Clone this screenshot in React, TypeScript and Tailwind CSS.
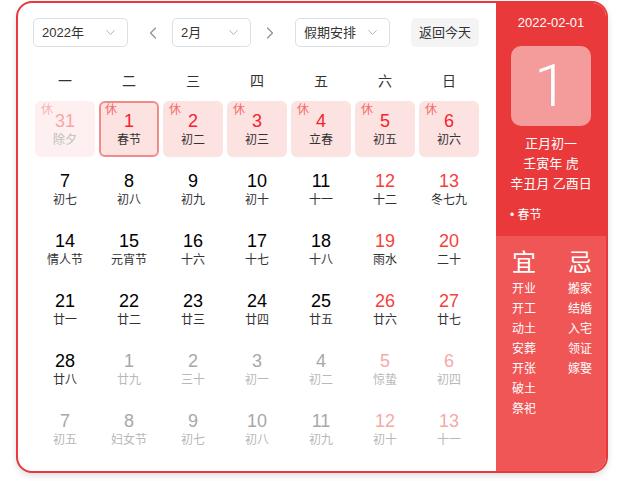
import React from "react";
import { ChevronDown, ChevronLeft, ChevronRight } from "lucide-react";

type Cell = {
  d: number;
  l: string;
  kind: "prev" | "cur" | "next";
  weekend?: boolean;
  rest?: boolean;
  selected?: boolean;
};

const FONT = { fontFamily: '"Liberation Sans", Arial, "Noto Sans CJK SC", sans-serif' };

const rows: Cell[][] = [
  [
    { d: 31, l: "除夕", kind: "prev", rest: true },
    { d: 1, l: "春节", kind: "cur", rest: true, selected: true },
    { d: 2, l: "初二", kind: "cur", rest: true },
    { d: 3, l: "初三", kind: "cur", rest: true },
    { d: 4, l: "立春", kind: "cur", rest: true },
    { d: 5, l: "初五", kind: "cur", rest: true, weekend: true },
    { d: 6, l: "初六", kind: "cur", rest: true, weekend: true },
  ],
  [
    { d: 7, l: "初七", kind: "cur" },
    { d: 8, l: "初八", kind: "cur" },
    { d: 9, l: "初九", kind: "cur" },
    { d: 10, l: "初十", kind: "cur" },
    { d: 11, l: "十一", kind: "cur" },
    { d: 12, l: "十二", kind: "cur", weekend: true },
    { d: 13, l: "冬七九", kind: "cur", weekend: true },
  ],
  [
    { d: 14, l: "情人节", kind: "cur" },
    { d: 15, l: "元宵节", kind: "cur" },
    { d: 16, l: "十六", kind: "cur" },
    { d: 17, l: "十七", kind: "cur" },
    { d: 18, l: "十八", kind: "cur" },
    { d: 19, l: "雨水", kind: "cur", weekend: true },
    { d: 20, l: "二十", kind: "cur", weekend: true },
  ],
  [
    { d: 21, l: "廿一", kind: "cur" },
    { d: 22, l: "廿二", kind: "cur" },
    { d: 23, l: "廿三", kind: "cur" },
    { d: 24, l: "廿四", kind: "cur" },
    { d: 25, l: "廿五", kind: "cur" },
    { d: 26, l: "廿六", kind: "cur", weekend: true },
    { d: 27, l: "廿七", kind: "cur", weekend: true },
  ],
  [
    { d: 28, l: "廿八", kind: "cur" },
    { d: 1, l: "廿九", kind: "next" },
    { d: 2, l: "三十", kind: "next" },
    { d: 3, l: "初一", kind: "next" },
    { d: 4, l: "初二", kind: "next" },
    { d: 5, l: "惊蛰", kind: "next", weekend: true },
    { d: 6, l: "初四", kind: "next", weekend: true },
  ],
  [
    { d: 7, l: "初五", kind: "next" },
    { d: 8, l: "妇女节", kind: "next" },
    { d: 9, l: "初七", kind: "next" },
    { d: 10, l: "初八", kind: "next" },
    { d: 11, l: "初九", kind: "next" },
    { d: 12, l: "初十", kind: "next", weekend: true },
    { d: 13, l: "十一", kind: "next", weekend: true },
  ],
];

function Select({ label, w }: { label: string; w: string }) {
  return (
    <div
      className={`${w} h-[29px] flex items-center justify-between pl-[8px] pr-[9px] border border-[#dcdfe6] rounded-[5px] bg-white text-[13px] text-[#333]`}
    >
      <span>{label}</span>
      <ChevronDown size={15} strokeWidth={1.5} color="#a8abb2" />
    </div>
  );
}

function DayCell({ c }: { c: Cell }) {
  let bg = "";
  let numColor = "text-black";
  let lunarColor = "text-[#333]";
  let restColor = "text-[#f56c6c]";
  if (c.kind === "prev") {
    bg = "bg-[#fef0f0]";
    numColor = "text-[#f7a7a7]";
    lunarColor = "text-[#bdbdbd]";
    restColor = "text-[#f9b4b4]";
  } else if (c.kind === "next") {
    numColor = c.weekend ? "text-[#f8a8a8]" : "text-[#a8a8a8]";
    lunarColor = "text-[#b8b8b8]";
  } else {
    if (c.rest) {
      bg = "bg-[#fde2e2]";
      numColor = "text-[#f5222d]";
    } else if (c.weekend) {
      numColor = "text-[#f5413d]";
    }
  }
  const border = c.selected ? "border-2 border-[#f28a8a]" : "";
  return (
    <div className={`relative h-[56px] rounded-[6px] ${bg} ${border} flex flex-col items-center ${c.selected ? "pt-[7px]" : "pt-[9px]"}`}>
      {c.rest && (
        <span className={`absolute ${c.selected ? "left-[4px] top-0" : "left-[6px] top-[2px]"} text-[12px] leading-[14px] ${restColor}`}>休</span>
      )}
      <span className={`text-[18px] leading-[22px] ${numColor}`}>{c.d}</span>
      <span className={`text-[12px] leading-[16px] ${lunarColor}`}>{c.l}</span>
    </div>
  );
}

export default function App() {
  const weekdays = ["一", "二", "三", "四", "五", "六", "日"];
  const yi = ["开业", "开工", "动土", "安葬", "开张", "破土", "祭祀"];
  const ji = ["搬家", "结婚", "入宅", "领证", "嫁娶"];
  return (
    <div className="w-[622px] h-[481px] bg-white" style={FONT}>
      <div className="ml-[16px] mt-[1px] w-[592px] h-[472px] border-2 border-[#e8383a] rounded-[16px] overflow-hidden flex bg-white shadow-[0_3px_6px_rgba(0,0,0,0.12)]">
        {/* left */}
        <div className="w-[478px] pl-[15px] pr-[17px] pt-[15px]">
          <div className="flex items-center h-[29px]">
            <Select label="2022年" w="w-[95px]" />
            <div className="w-[44px] flex justify-center pl-[6px]">
              <ChevronLeft size={20} strokeWidth={1.5} color="#909399" />
            </div>
            <Select label="2月" w="w-[79px]" />
            <div className="w-[44px] flex justify-center pr-[6px]">
              <ChevronRight size={20} strokeWidth={1.5} color="#909399" />
            </div>
            <Select label="假期安排" w="w-[95px]" />
            <div className="ml-[21px] w-[68px] h-[29px] rounded-[5px] bg-[#f4f4f5] flex items-center justify-center text-[13px] text-[#333]">
              返回今天
            </div>
          </div>
          <div className="ml-[2px] w-[444px] mt-[22px] grid grid-cols-7 gap-x-[4px] h-[24px] items-center">
            {weekdays.map((w) => (
              <div key={w} className="text-center text-[14px] text-[#333]">
                {w}
              </div>
            ))}
          </div>
          <div className="ml-[2px] w-[444px] mt-[8px] grid grid-cols-7 gap-[4px]">
            {rows.flat().map((c, i) => (
              <DayCell key={i} c={c} />
            ))}
          </div>
        </div>
        {/* right */}
        <div className="w-[110px] flex flex-col text-white">
          <div className="h-[233px] bg-[#e9393a] flex flex-col">
            <div className="pt-[11px] text-center text-[13px] leading-[18px]">2022-02-01</div>
            <div className="mt-[14px] mx-auto w-[80px] h-[80px] rounded-[10px] bg-[#f49b9b] flex items-center justify-center">
              <span className="text-[60px] leading-none font-light" style={{ fontFamily: 'Roboto, "Liberation Sans", sans-serif' }}>1</span>
            </div>
            <div className="mt-[8px] flex flex-col items-center text-[13px] leading-[20px]">
              <span>正月初一</span>
              <span>壬寅年 虎</span>
              <span>辛丑月 乙酉日</span>
            </div>
            <div className="mt-[11px] pl-[14px] text-[12px] leading-[20px]">• 春节</div>
          </div>
          <div className="flex-1 bg-[#f05656] flex pl-[16px] pt-[12px]">
            <div className="w-[56px] flex flex-col">
              <span className="text-[24px] leading-[30px] mb-[1px]">宜</span>
              {yi.map((t) => (
                <span key={t} className="text-[12px] leading-[20px]">{t}</span>
              ))}
            </div>
            <div className="flex flex-col">
              <span className="text-[24px] leading-[30px] mb-[1px]">忌</span>
              {ji.map((t) => (
                <span key={t} className="text-[12px] leading-[20px]">{t}</span>
              ))}
            </div>
          </div>
        </div>
      </div>
    </div>
  );
}
